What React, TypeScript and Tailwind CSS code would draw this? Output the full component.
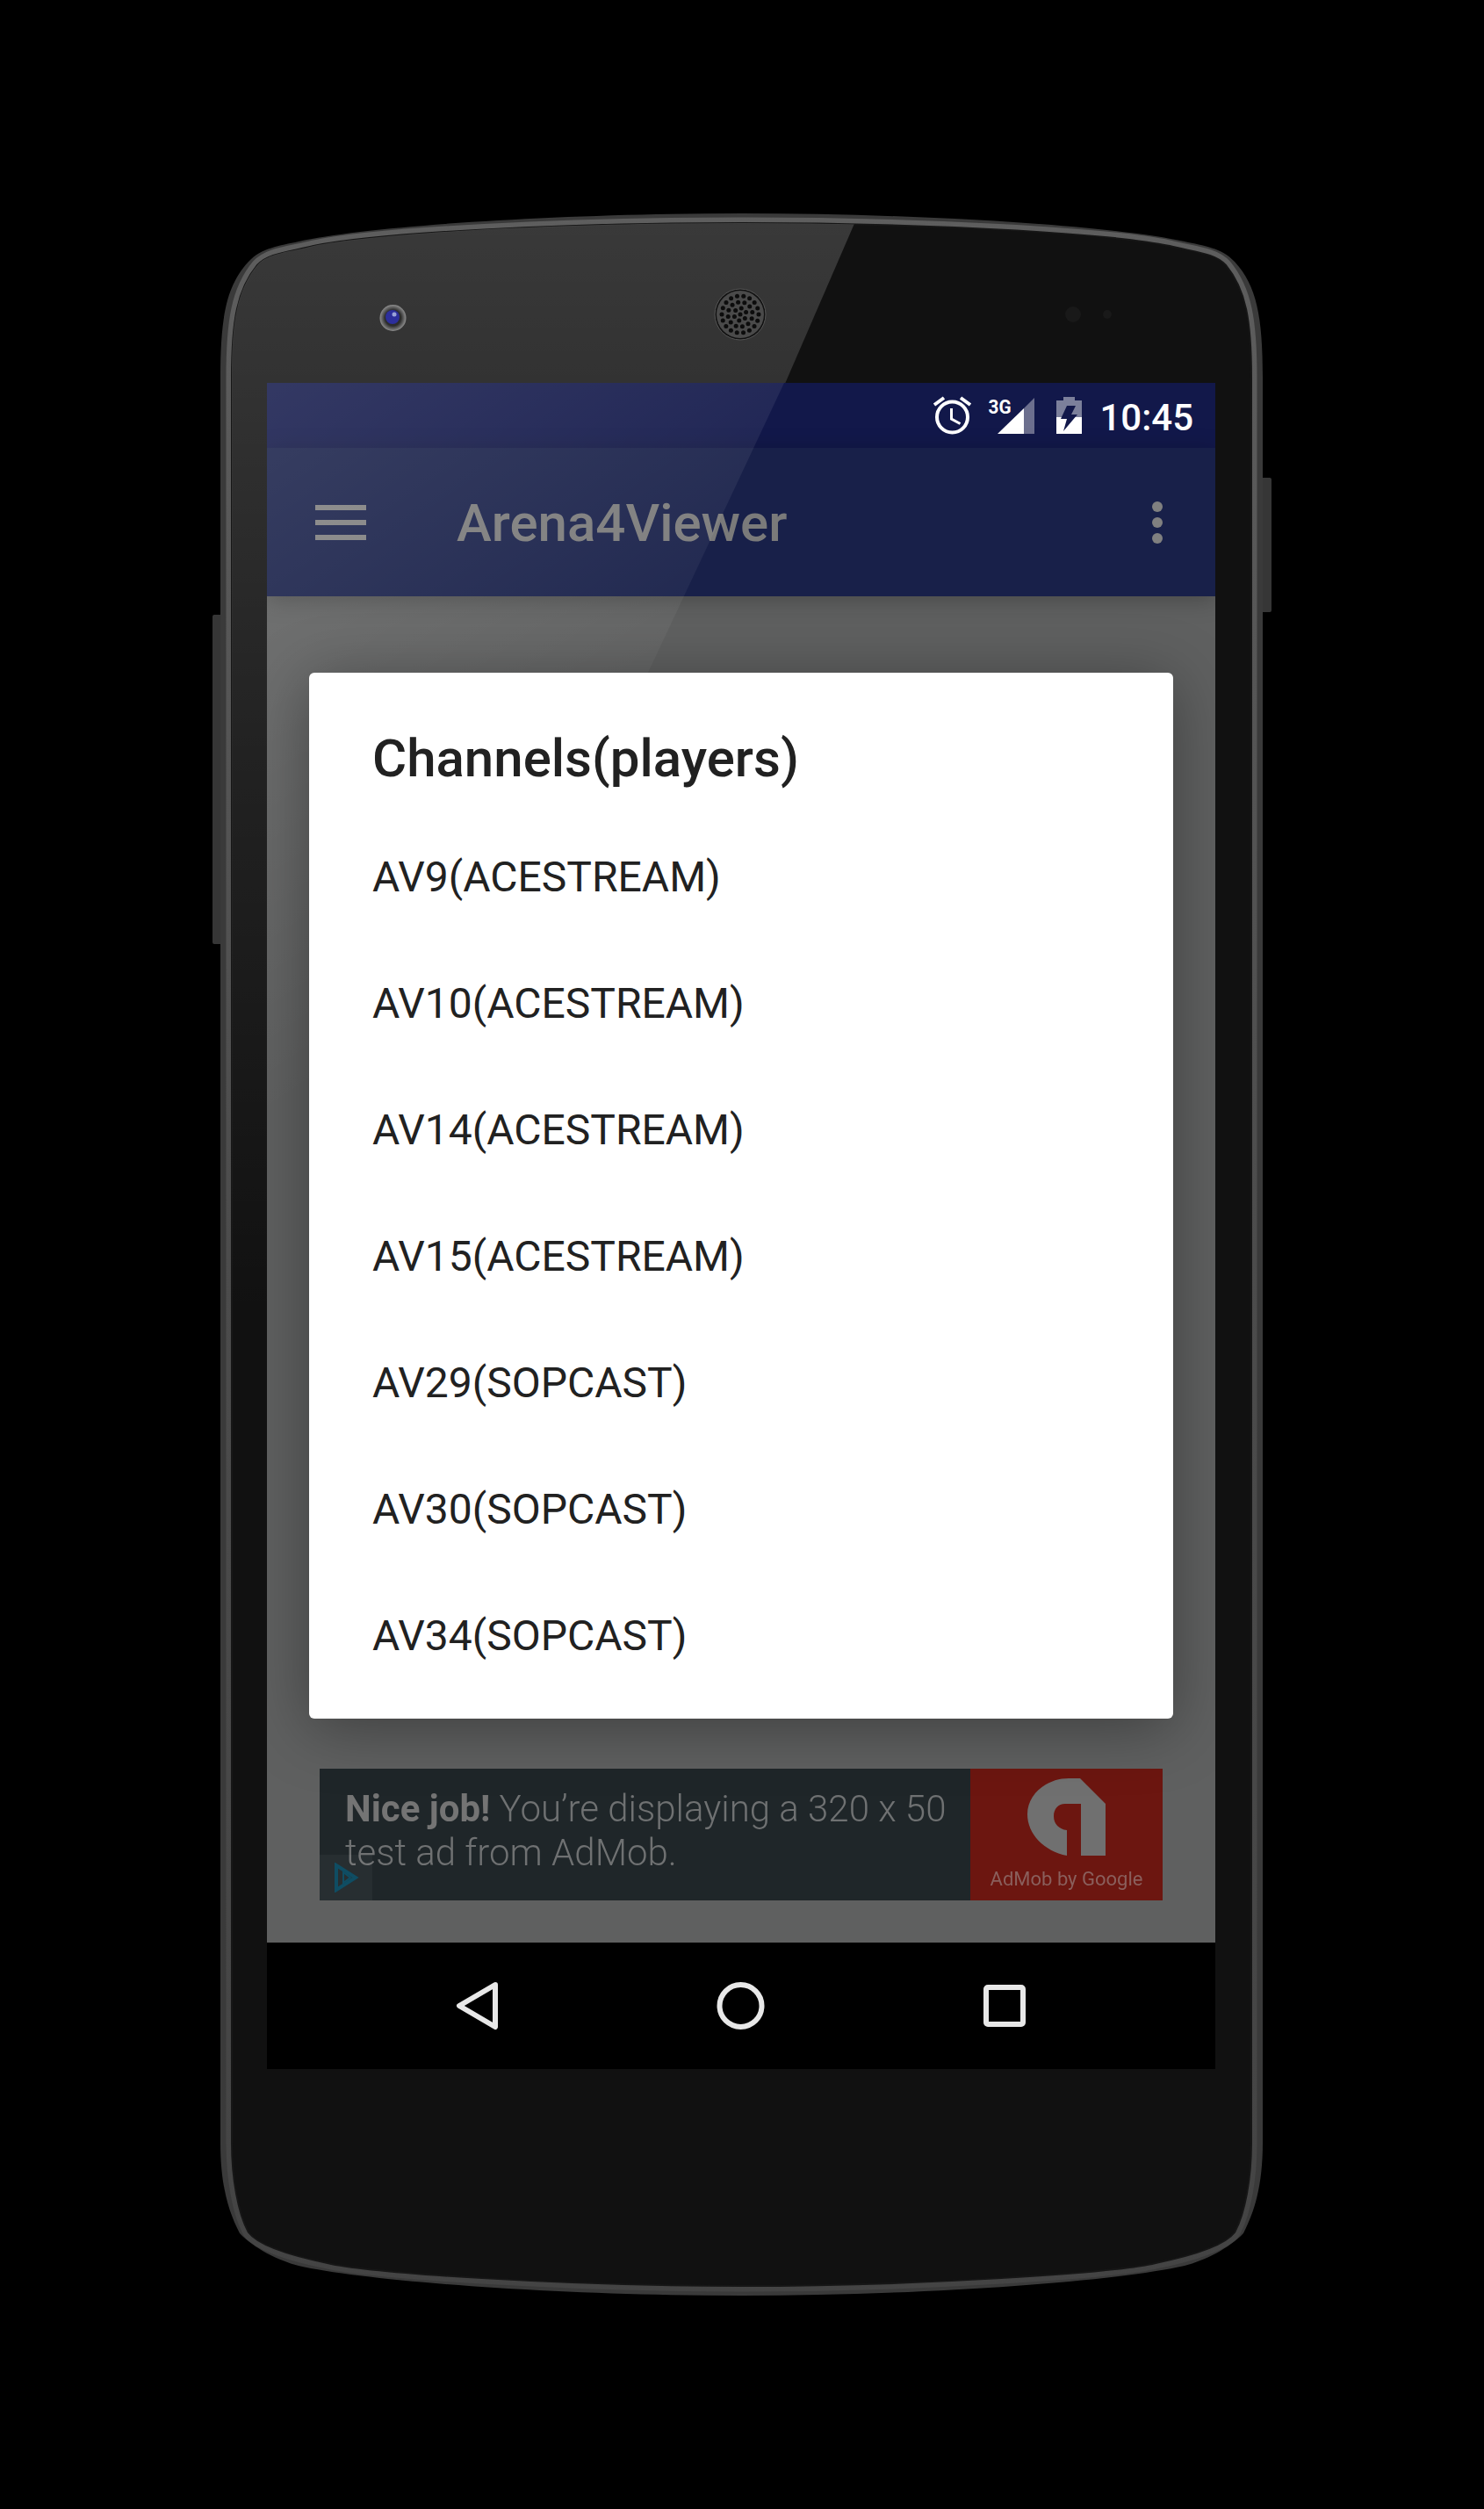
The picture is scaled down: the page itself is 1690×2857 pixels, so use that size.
import React from "react";

const channels = [
  "AV9(ACESTREAM)",
  "AV10(ACESTREAM)",
  "AV14(ACESTREAM)",
  "AV15(ACESTREAM)",
  "AV29(SOPCAST)",
  "AV30(SOPCAST)",
  "AV34(SOPCAST)",
];

const OUTER =
  "M251 430 C251 360 258 325 283 298 C298 282 318 280 340 275 C420 257 640 243 844.5 243 C1049 243 1269 257 1349 275 C1371 280 1391 282 1406 298 C1431 325 1438 360 1438 430 L1438 2440 C1438 2490 1428 2520 1416 2543 C1400 2560 1372 2574 1349 2580 C1270 2598 1050 2614 844.5 2614 C640 2614 419 2598 340 2580 C317 2574 289 2560 273 2543 C261 2520 251 2490 251 2440 Z";
const INNER =
  "M264 430 C264 365 270 330 293 302 C305 288 330 287 357 280 C430 265 640 254 844.5 254 C1049 254 1259 265 1332 280 C1359 287 1384 288 1396 302 C1419 330 1425 365 1425 430 L1425 2440 C1425 2480 1418 2520 1406 2542 C1394 2558 1350 2570 1316 2577 C1270 2588 1050 2603 844.5 2603 C640 2603 419 2588 373 2577 C339 2570 295 2558 283 2542 C271 2520 264 2480 264 2440 Z";

// rings of holes in the earpiece grille
const speakerHoles: [number, number][] = [[843, 358]];
[
  [7, 6],
  [14, 12],
  [21, 18],
].forEach(([r, n]) => {
  for (let i = 0; i < n; i++) {
    const a = (i / n) * Math.PI * 2 + r * 0.1;
    speakerHoles.push([843 + r * Math.cos(a), 358 + r * Math.sin(a)]);
  }
});

function PhoneShell() {
  return (
    <svg className="absolute top-0 left-0" width="1690" height="2857" viewBox="0 0 1690 2857">
      <defs>
        <linearGradient id="glare" x1="0" y1="243" x2="0" y2="1500" gradientUnits="userSpaceOnUse">
          <stop offset="0" stopColor="#fff" stopOpacity="0.17" />
          <stop offset="0.5" stopColor="#fff" stopOpacity="0.07" />
          <stop offset="1" stopColor="#fff" stopOpacity="0" />
        </linearGradient>
        <linearGradient id="rim" x1="0" y1="243" x2="0" y2="2614" gradientUnits="userSpaceOnUse">
          <stop offset="0" stopColor="#5e5e5e" />
          <stop offset="0.5" stopColor="#4c4c4c" />
          <stop offset="1" stopColor="#444444" />
        </linearGradient>
        <radialGradient id="lensRing" cx="0.5" cy="0.5" r="0.5">
          <stop offset="0.6" stopColor="#2c2c2c" />
          <stop offset="1" stopColor="#8e8e8e" />
        </radialGradient>
        <clipPath id="bezel">
          <path d={INNER} />
        </clipPath>
      </defs>

      {/* side buttons */}
      <rect x="242" y="700" width="14" height="375" rx="2" fill="#363636" />
      <rect x="1434" y="544" width="14" height="153" rx="2" fill="#363636" />

      <path d={OUTER} fill="#3a3a3a" />
      <path d={INNER} fill="none" stroke="url(#rim)" strokeWidth="13" />
      <path d={INNER} fill="#111111" stroke="#161616" strokeWidth="2" />
      <polygon points="978,243 251,1920 251,243" fill="url(#glare)" clipPath="url(#bezel)" />

      {/* front camera */}
      <circle cx="447.5" cy="362" r="15" fill="url(#lensRing)" />
      <circle cx="447" cy="361" r="8" fill="#2d2f9c" />
      <circle cx="449" cy="358" r="2.5" fill="#9aa3d8" />

      {/* earpiece */}
      <circle cx="843" cy="358" r="29" fill="#111" stroke="#555" strokeWidth="1" />
      <circle cx="843" cy="358" r="27" fill="#4a4a4a" />
      {speakerHoles.map(([x, y], i) => (
        <circle key={i} cx={x} cy={y} r="2.5" fill="#0c0c0c" />
      ))}

      {/* proximity sensors */}
      <circle cx="1222" cy="358" r="9" fill="#191919" />
      <circle cx="1261" cy="358" r="5" fill="#191919" />
    </svg>
  );
}

function StatusBar() {
  return (
    <div className="h-[74px] bg-[#12184a] flex items-center justify-end relative">
      <svg className="absolute left-[750px] top-0" width="190" height="74" viewBox="750 0 190 74">
        {/* alarm */}
        <g fill="none" stroke="#fff" strokeWidth="4">
          <circle cx="780.5" cy="39" r="17.5" />
          <path d="M779.5 29 V41 L789.5 46.5" strokeWidth="3" />
          <path d="M760 25 L771 17 M790 17 L801 25" />
        </g>
        {/* signal */}
        <polygon points="874,17 874,58 862,58 862,29" fill="#fff" fillOpacity="0.38" />
        <polygon points="862,29 862,58 832,58" fill="#fff" />
        <text x="821.5" y="35" fill="#fff" fontSize="22" fontWeight="700" fontFamily="Roboto, sans-serif" textLength="26" lengthAdjust="spacingAndGlyphs">3G</text>
        {/* battery */}
        <path d="M899 20 H907 V16 H920 V20 H928 V39 H899 Z" fill="#fff" fillOpacity="0.45" />
        <rect x="899" y="39" width="29" height="19" fill="#fff" />
        <polygon points="911,26 921,26 916,36 923,36 907,55 911,41 904,41" fill="#12184a" />
      </svg>
      <span className="text-[42px] leading-none font-medium text-white mr-[25px] mt-[5px]">10:45</span>
    </div>
  );
}

function AppBar() {
  return (
    <div className="h-[169px] bg-[#182049] flex items-center relative shadow-[0_4px_24px_rgba(0,0,0,0.25)]">
      <div className="w-[216px] pl-[55px] shrink-0 flex flex-col gap-[11px]">
        <div className="w-[58px] h-[6px] bg-[#7f7f7f]" />
        <div className="w-[58px] h-[6px] bg-[#7f7f7f]" />
        <div className="w-[58px] h-[6px] bg-[#7f7f7f]" />
      </div>
      <h1 className="text-[60px] leading-none font-medium text-[#7a7a7a] flex-1 mt-[3px]">Arena4Viewer</h1>
      <div className="flex flex-col gap-[6px] mr-[60px]">
        <div className="w-[12px] h-[12px] rounded-full bg-[#808080]" />
        <div className="w-[12px] h-[12px] rounded-full bg-[#808080]" />
        <div className="w-[12px] h-[12px] rounded-full bg-[#808080]" />
      </div>
    </div>
  );
}

function ChannelDialog() {
  return (
    <div className="relative z-10 mx-[48px] mt-[87px] h-[1191px] bg-white rounded-[6px] shadow-[0_10px_70px_rgba(0,0,0,0.35)] text-[#212121]">
      <h2 className="pl-[72px] pt-[62px] h-[160px] text-[60px] leading-[72px] font-medium">Channels(players)</h2>
      <ul>
        {channels.map((name) => (
          <li key={name} className="h-[144px] pl-[72px] pt-[2px] flex items-center text-[48px]">
            {name}
          </li>
        ))}
      </ul>
    </div>
  );
}

function AdBanner() {
  return (
    <div className="mx-[60px] mt-[57px] h-[150px] flex bg-[#1f2629] relative">
      <p className="flex-1 pl-[29px] pt-[21px] text-[42px] leading-[50px] font-light text-[#6f7172] blur-[0.4px]">
        <span className="font-bold text-[#747474]">Nice job!</span> You’re displaying a 320 x 50
        <br />
        test ad from AdMob.
      </p>
      <div className="w-[219px] bg-[#6c1610] flex flex-col items-center pt-[11px]">
        <svg width="89" height="90" viewBox="65 11 89 90">
          <path
            d="M110 99 C84 94 65 74 65 52 C65 28 88 11 112 11 H125 L154 40 V99 H126 V40 H108 C100 40 95 46 95 54 C95 63 101 69 110 70 Z"
            fill="#707070"
          />
        </svg>
        <span className="text-[22px] leading-none mt-[14px] text-[#8a5f5c] blur-[0.4px]">AdMob by Google</span>
      </div>
      <div className="absolute left-0 bottom-0 w-[60px] h-[52px] bg-[#ffffff]/[0.04] flex items-center justify-center">
        <svg width="30" height="34" viewBox="0 0 30 34" fill="none" stroke="#0f4d63" strokeWidth="4">
          <path d="M4 3 V31 L26 17 Z" />
          <path d="M12 11 V23 L20 17 Z" strokeWidth="2" />
        </svg>
      </div>
    </div>
  );
}

function NavBar() {
  return (
    <div className="h-[144px] bg-black relative flex items-center z-10">
      <svg width="1080" height="144" viewBox="304 2212 1080 144" fill="none" stroke="#e8e8e8" strokeWidth="6">
        <path d="M564 2260 L523 2284 L564 2308 Z" strokeLinejoin="round" />
        <circle cx="843.5" cy="2284" r="24" />
        <rect x="1123" y="2263" width="42" height="42" rx="2" />
      </svg>
    </div>
  );
}

export default function App() {
  return (
    <div className="relative w-[1690px] h-[2857px] bg-black overflow-hidden font-['Roboto',sans-serif]">
      <PhoneShell />
      <div className="relative ml-[304px] top-[436px] w-[1080px] h-[1920px] flex flex-col overflow-hidden">
        <StatusBar />
        <AppBar />
        <div className="flex-1 flex flex-col bg-[#5f6060]">
          <ChannelDialog />
          <AdBanner />
        </div>
        <NavBar />
        {/* glass reflection across the top left of the screen */}
        <div className="absolute top-0 left-0 w-[589px] h-[1253px] z-[1] pointer-events-none bg-[linear-gradient(146deg,rgba(255,255,255,0.14),rgba(255,255,255,0)_51%)] [clip-path:polygon(0_0,100%_0,0_100%)]" />
      </div>
    </div>
  );
}
